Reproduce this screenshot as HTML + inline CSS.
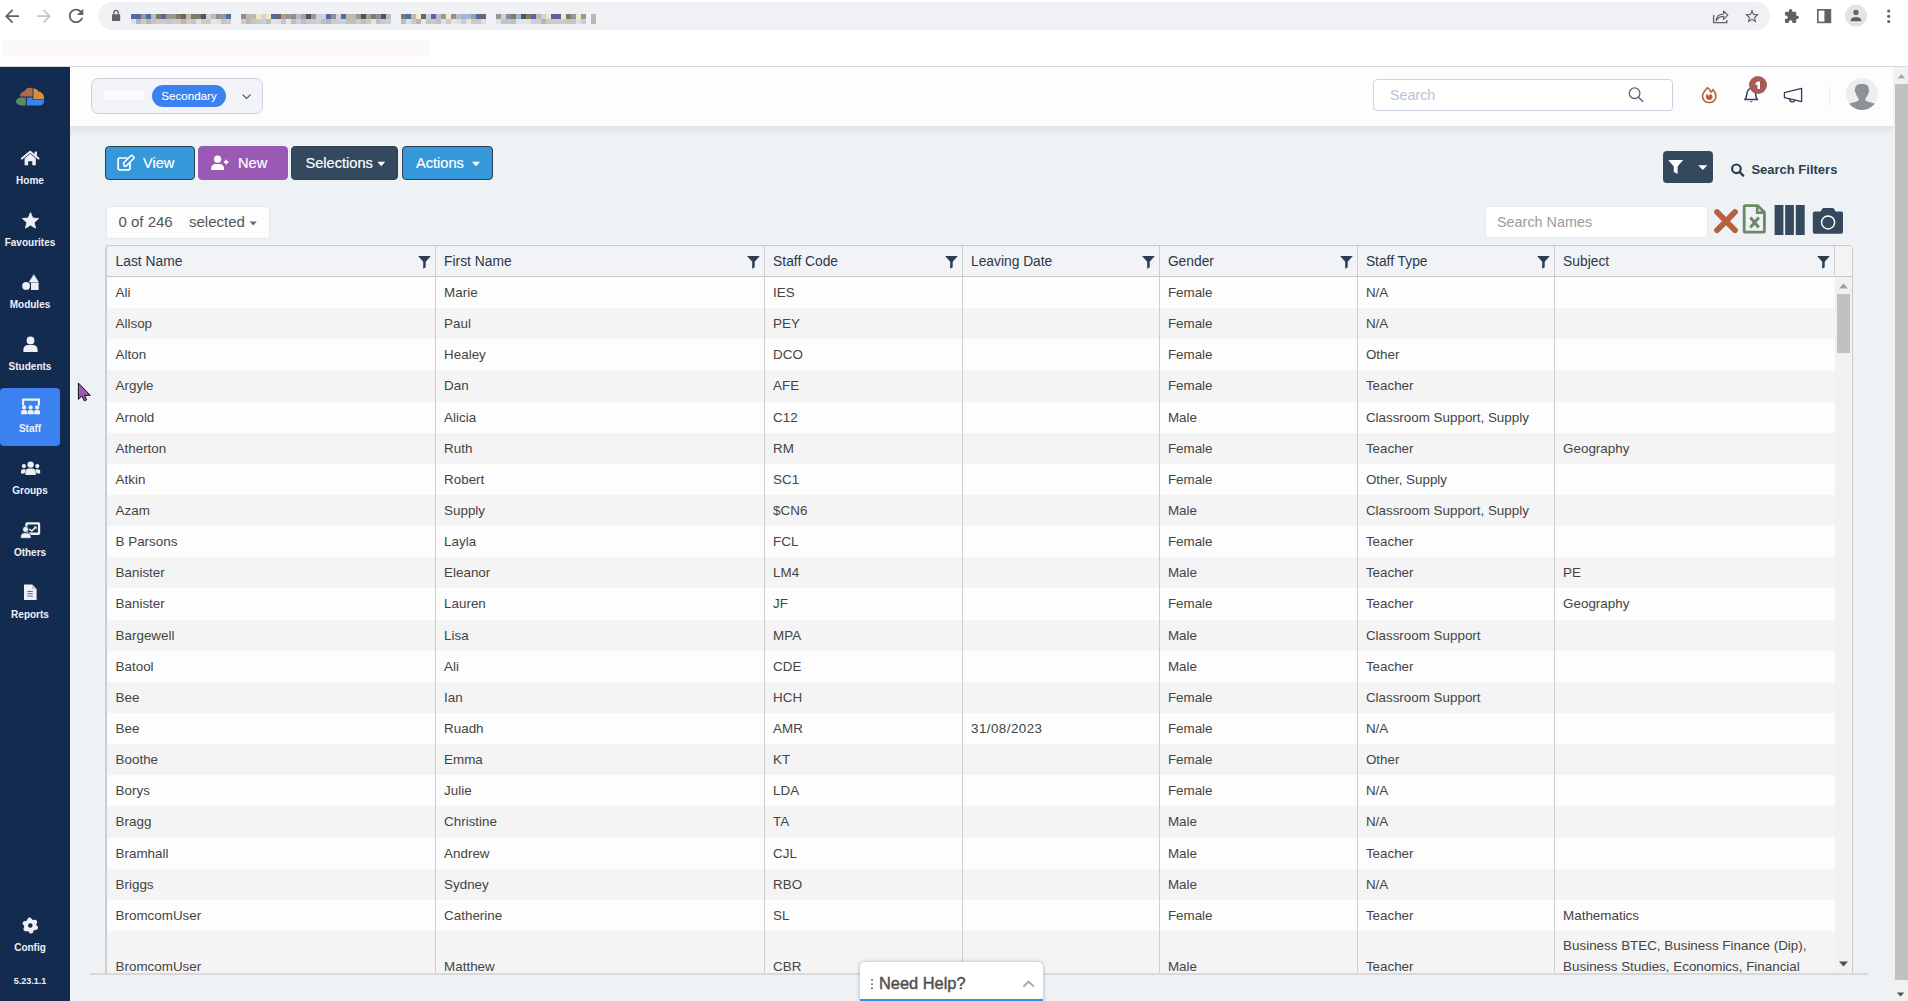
<!DOCTYPE html>
<html><head><meta charset="utf-8"><title>Staff</title>
<style>
*{box-sizing:border-box;margin:0;padding:0}
html,body{width:1908px;height:1001px;overflow:hidden;background:#fff;font-family:"Liberation Sans",sans-serif;position:relative}
.a{position:absolute}
svg.a{overflow:visible}
#chrome{left:0;top:0;width:1908px;height:67px;background:#fff;border-bottom:1px solid #d6d8dc}
#omni{left:98px;top:2px;width:1672px;height:28px;border-radius:14px;background:#eff1f4}
#side{left:0;top:67px;width:70px;height:934px;background:#142b50}
.lbl{position:absolute;left:0;width:60px;text-align:center;color:#eef0f5;font-weight:bold;font-size:10px;line-height:12px;white-space:nowrap}
#hdr{left:70px;top:67px;width:1823px;height:59px;background:#fdfdfe}
#main{left:70px;top:126px;width:1823px;height:875px;background:#eff2f5}
#shadow{left:70px;top:126px;width:1823px;height:11px;background:linear-gradient(#e2e4e7,#eff2f5)}
.btn{position:absolute;top:146px;height:34px;border-radius:4px;color:#fff;font-size:14.6px;line-height:33px;white-space:nowrap;-webkit-text-stroke:0.2px #fff}
#tbl{left:106px;top:245px;width:1747px;height:729px;border:1px solid #c9c9c9;border-radius:4px 4px 0 0;background:#fdfdfd;overflow:hidden;box-shadow:-1px 0 0 #d4d4d4}
.th{position:absolute;top:0;height:31px;background:#f1f3f7;border-bottom:1px solid #c9c9c9;color:#2d3748;font-size:13.8px;line-height:31.6px;padding-left:8.6px;white-space:nowrap}
.th svg{position:absolute;right:4.6px;top:10px}
.row{position:absolute;left:0;width:1728px;height:31.1px}
.row.g{background:#f4f4f4}
.c{position:absolute;top:0;height:100%;color:#444;font-size:13.4px;padding-left:8.6px;display:flex;align-items:center;white-space:nowrap}
.vl{position:absolute;top:31px;bottom:0;width:1px;background:#cfcfcf}
</style></head><body>

<!-- ============ CHROME ============ -->
<div id="chrome" class="a">
  <div id="omni" class="a"></div>
  <div class="a" style="left:3px;top:40px;width:427px;height:17px;background:#fdf9f8"></div>
<svg class="a" style="left:0;top:0" width="1908" height="67"><g filter="url(#bl)"><rect x="131" y="14" width="5" height="5" fill="#4a6ea8"/><rect x="131" y="19" width="5" height="5" fill="#d9dde6" opacity=".8"/><rect x="136" y="14" width="5" height="5" fill="#5d62a8"/><rect x="136" y="19" width="5" height="5" fill="#a9a9a9" opacity=".8"/><rect x="141" y="14" width="5" height="5" fill="#9a9690"/><rect x="141" y="19" width="5" height="5" fill="#c8c0b6" opacity=".8"/><rect x="146" y="14" width="5" height="5" fill="#4a6ea8"/><rect x="146" y="19" width="5" height="5" fill="#a9a9a9" opacity=".8"/><rect x="151" y="14" width="5" height="5" fill="#b9bcc4"/><rect x="151" y="19" width="5" height="5" fill="#b7bac2" opacity=".8"/><rect x="156" y="14" width="5" height="5" fill="#7d7b66"/><rect x="156" y="19" width="5" height="5" fill="#c8c0b6" opacity=".8"/><rect x="161" y="14" width="5" height="5" fill="#5d62a8"/><rect x="161" y="19" width="5" height="5" fill="#c6c2bb" opacity=".8"/><rect x="166" y="14" width="5" height="5" fill="#9a9690"/><rect x="166" y="19" width="5" height="5" fill="#b7bac2" opacity=".8"/><rect x="171" y="14" width="5" height="5" fill="#9a9690"/><rect x="171" y="19" width="5" height="5" fill="#c6c2bb" opacity=".8"/><rect x="176" y="14" width="5" height="5" fill="#7d7b66"/><rect x="176" y="19" width="5" height="5" fill="#c8c0b6" opacity=".8"/><rect x="181" y="14" width="5" height="5" fill="#6d6362"/><rect x="181" y="19" width="5" height="5" fill="#a9a9a9" opacity=".8"/><rect x="186" y="14" width="5" height="5" fill="#c7b6a5"/><rect x="186" y="19" width="5" height="5" fill="#c6c2bb" opacity=".8"/><rect x="191" y="14" width="5" height="5" fill="#7d7b66"/><rect x="191" y="19" width="5" height="5" fill="#b7bac2" opacity=".8"/><rect x="196" y="14" width="5" height="5" fill="#7d7b66"/><rect x="196" y="19" width="5" height="5" fill="#d9dde6" opacity=".8"/><rect x="201" y="14" width="5" height="5" fill="#4d555b"/><rect x="201" y="19" width="5" height="5" fill="#c6c2bb" opacity=".8"/><rect x="206" y="14" width="5" height="5" fill="#c9d2e2"/><rect x="206" y="19" width="5" height="5" fill="#c8c0b6" opacity=".8"/><rect x="211" y="14" width="5" height="5" fill="#c7b6a5"/><rect x="211" y="19" width="5" height="5" fill="#e8e2d6" opacity=".8"/><rect x="216" y="14" width="5" height="5" fill="#8b9096"/><rect x="216" y="19" width="5" height="5" fill="#d9dde6" opacity=".8"/><rect x="221" y="14" width="5" height="5" fill="#9a9690"/><rect x="221" y="19" width="5" height="5" fill="#b7bac2" opacity=".8"/><rect x="226" y="14" width="5" height="5" fill="#4a6ea8"/><rect x="226" y="19" width="5" height="5" fill="#c8c0b6" opacity=".8"/><rect x="241" y="14" width="5" height="5" fill="#8b9096"/><rect x="241" y="19" width="5" height="5" fill="#c8c0b6" opacity=".8"/><rect x="246" y="14" width="5" height="5" fill="#c7b6a5"/><rect x="246" y="19" width="5" height="5" fill="#a9a9a9" opacity=".8"/><rect x="251" y="14" width="5" height="5" fill="#c7b6a5"/><rect x="251" y="19" width="5" height="5" fill="#b7bac2" opacity=".8"/><rect x="256" y="14" width="5" height="5" fill="#f3e6c9"/><rect x="256" y="19" width="5" height="5" fill="#c6c2bb" opacity=".8"/><rect x="261" y="14" width="5" height="5" fill="#d3d3d8"/><rect x="261" y="19" width="5" height="5" fill="#bfc7d6" opacity=".8"/><rect x="266" y="14" width="5" height="5" fill="#f3e6c9"/><rect x="266" y="19" width="5" height="5" fill="#aeb4bc" opacity=".8"/><rect x="271" y="14" width="5" height="5" fill="#4a6ea8"/><rect x="271" y="19" width="5" height="5" fill="#e8e2d6" opacity=".8"/><rect x="276" y="14" width="5" height="5" fill="#6d6362"/><rect x="276" y="19" width="5" height="5" fill="#d9dde6" opacity=".8"/><rect x="281" y="14" width="5" height="5" fill="#a29f98"/><rect x="281" y="19" width="5" height="5" fill="#b7bac2" opacity=".8"/><rect x="286" y="14" width="5" height="5" fill="#9a9690"/><rect x="286" y="19" width="5" height="5" fill="#e8e2d6" opacity=".8"/><rect x="291" y="14" width="5" height="5" fill="#8b9096"/><rect x="291" y="19" width="5" height="5" fill="#aeb4bc" opacity=".8"/><rect x="296" y="14" width="5" height="5" fill="#b9bcc4"/><rect x="296" y="19" width="5" height="5" fill="#bfc7d6" opacity=".8"/><rect x="301" y="14" width="5" height="5" fill="#a29f98"/><rect x="301" y="19" width="5" height="5" fill="#aeb4bc" opacity=".8"/><rect x="306" y="14" width="5" height="5" fill="#4d555b"/><rect x="306" y="19" width="5" height="5" fill="#c8c0b6" opacity=".8"/><rect x="311" y="14" width="5" height="5" fill="#9a9690"/><rect x="311" y="19" width="5" height="5" fill="#c6c2bb" opacity=".8"/><rect x="316" y="14" width="5" height="5" fill="#c9d2e2"/><rect x="316" y="19" width="5" height="5" fill="#bfc7d6" opacity=".8"/><rect x="321" y="14" width="5" height="5" fill="#c9d2e2"/><rect x="321" y="19" width="5" height="5" fill="#aeb4bc" opacity=".8"/><rect x="326" y="14" width="5" height="5" fill="#5d62a8"/><rect x="326" y="19" width="5" height="5" fill="#a9a9a9" opacity=".8"/><rect x="331" y="14" width="5" height="5" fill="#8a8e9c"/><rect x="331" y="19" width="5" height="5" fill="#c8c0b6" opacity=".8"/><rect x="336" y="14" width="5" height="5" fill="#d3d3d8"/><rect x="336" y="19" width="5" height="5" fill="#bfc7d6" opacity=".8"/><rect x="341" y="14" width="5" height="5" fill="#4a6ea8"/><rect x="341" y="19" width="5" height="5" fill="#bfc7d6" opacity=".8"/><rect x="346" y="14" width="5" height="5" fill="#c7b6a5"/><rect x="346" y="19" width="5" height="5" fill="#aeb4bc" opacity=".8"/><rect x="351" y="14" width="5" height="5" fill="#c7b6a5"/><rect x="351" y="19" width="5" height="5" fill="#aeb4bc" opacity=".8"/><rect x="356" y="14" width="5" height="5" fill="#9a9690"/><rect x="356" y="19" width="5" height="5" fill="#c8c0b6" opacity=".8"/><rect x="361" y="14" width="5" height="5" fill="#4d555b"/><rect x="361" y="19" width="5" height="5" fill="#aeb4bc" opacity=".8"/><rect x="366" y="14" width="5" height="5" fill="#a29f98"/><rect x="366" y="19" width="5" height="5" fill="#c8c0b6" opacity=".8"/><rect x="371" y="14" width="5" height="5" fill="#7d7b66"/><rect x="371" y="19" width="5" height="5" fill="#e8e2d6" opacity=".8"/><rect x="376" y="14" width="5" height="5" fill="#8a8e9c"/><rect x="376" y="19" width="5" height="5" fill="#aeb4bc" opacity=".8"/><rect x="381" y="14" width="5" height="5" fill="#4d555b"/><rect x="381" y="19" width="5" height="5" fill="#c6c2bb" opacity=".8"/><rect x="386" y="14" width="5" height="5" fill="#b9bcc4"/><rect x="386" y="19" width="5" height="5" fill="#bfc7d6" opacity=".8"/><rect x="401" y="14" width="5" height="5" fill="#7d7b66"/><rect x="401" y="19" width="5" height="5" fill="#aeb4bc" opacity=".8"/><rect x="406" y="14" width="5" height="5" fill="#4a6ea8"/><rect x="406" y="19" width="5" height="5" fill="#d9dde6" opacity=".8"/><rect x="411" y="14" width="5" height="5" fill="#c7b6a5"/><rect x="411" y="19" width="5" height="5" fill="#c8c0b6" opacity=".8"/><rect x="416" y="14" width="5" height="5" fill="#f3e6c9"/><rect x="416" y="19" width="5" height="5" fill="#a9a9a9" opacity=".8"/><rect x="421" y="14" width="5" height="5" fill="#6d6362"/><rect x="421" y="19" width="5" height="5" fill="#e8e2d6" opacity=".8"/><rect x="426" y="14" width="5" height="5" fill="#c9d2e2"/><rect x="426" y="19" width="5" height="5" fill="#b7bac2" opacity=".8"/><rect x="431" y="14" width="5" height="5" fill="#5d62a8"/><rect x="431" y="19" width="5" height="5" fill="#c6c2bb" opacity=".8"/><rect x="436" y="14" width="5" height="5" fill="#b9bcc4"/><rect x="436" y="19" width="5" height="5" fill="#aeb4bc" opacity=".8"/><rect x="441" y="14" width="5" height="5" fill="#9a9690"/><rect x="441" y="19" width="5" height="5" fill="#d9dde6" opacity=".8"/><rect x="446" y="14" width="5" height="5" fill="#f3e6c9"/><rect x="446" y="19" width="5" height="5" fill="#c6c2bb" opacity=".8"/><rect x="451" y="14" width="5" height="5" fill="#8b9096"/><rect x="451" y="19" width="5" height="5" fill="#e8e2d6" opacity=".8"/><rect x="456" y="14" width="5" height="5" fill="#b9bcc4"/><rect x="456" y="19" width="5" height="5" fill="#d9dde6" opacity=".8"/><rect x="461" y="14" width="5" height="5" fill="#9fb7d6"/><rect x="461" y="19" width="5" height="5" fill="#c6c2bb" opacity=".8"/><rect x="466" y="14" width="5" height="5" fill="#9fb7d6"/><rect x="466" y="19" width="5" height="5" fill="#e8e2d6" opacity=".8"/><rect x="471" y="14" width="5" height="5" fill="#a29f98"/><rect x="471" y="19" width="5" height="5" fill="#c6c2bb" opacity=".8"/><rect x="476" y="14" width="5" height="5" fill="#4a6ea8"/><rect x="476" y="19" width="5" height="5" fill="#c6c2bb" opacity=".8"/><rect x="481" y="14" width="5" height="5" fill="#6d6362"/><rect x="481" y="19" width="5" height="5" fill="#d9dde6" opacity=".8"/><rect x="496" y="14" width="5" height="5" fill="#9a9690"/><rect x="496" y="19" width="5" height="5" fill="#d9dde6" opacity=".8"/><rect x="501" y="14" width="5" height="5" fill="#c9d2e2"/><rect x="501" y="19" width="5" height="5" fill="#b7bac2" opacity=".8"/><rect x="506" y="14" width="5" height="5" fill="#8a8e9c"/><rect x="506" y="19" width="5" height="5" fill="#b7bac2" opacity=".8"/><rect x="511" y="14" width="5" height="5" fill="#7d7b66"/><rect x="511" y="19" width="5" height="5" fill="#aeb4bc" opacity=".8"/><rect x="516" y="14" width="5" height="5" fill="#9fb7d6"/><rect x="516" y="19" width="5" height="5" fill="#d9dde6" opacity=".8"/><rect x="521" y="14" width="5" height="5" fill="#4d555b"/><rect x="521" y="19" width="5" height="5" fill="#e8e2d6" opacity=".8"/><rect x="526" y="14" width="5" height="5" fill="#7d7b66"/><rect x="526" y="19" width="5" height="5" fill="#d9dde6" opacity=".8"/><rect x="531" y="14" width="5" height="5" fill="#5d62a8"/><rect x="531" y="19" width="5" height="5" fill="#bfc7d6" opacity=".8"/><rect x="536" y="14" width="5" height="5" fill="#c7b6a5"/><rect x="536" y="19" width="5" height="5" fill="#bfc7d6" opacity=".8"/><rect x="541" y="14" width="5" height="5" fill="#c9d2e2"/><rect x="541" y="19" width="5" height="5" fill="#a9a9a9" opacity=".8"/><rect x="546" y="14" width="5" height="5" fill="#f3e6c9"/><rect x="546" y="19" width="5" height="5" fill="#c6c2bb" opacity=".8"/><rect x="551" y="14" width="5" height="5" fill="#5d62a8"/><rect x="551" y="19" width="5" height="5" fill="#c6c2bb" opacity=".8"/><rect x="556" y="14" width="5" height="5" fill="#5d62a8"/><rect x="556" y="19" width="5" height="5" fill="#c8c0b6" opacity=".8"/><rect x="561" y="14" width="5" height="5" fill="#f3e6c9"/><rect x="561" y="19" width="5" height="5" fill="#c6c2bb" opacity=".8"/><rect x="566" y="14" width="5" height="5" fill="#7d7b66"/><rect x="566" y="19" width="5" height="5" fill="#b7bac2" opacity=".8"/><rect x="571" y="14" width="5" height="5" fill="#9a9690"/><rect x="571" y="19" width="5" height="5" fill="#b7bac2" opacity=".8"/><rect x="576" y="14" width="5" height="5" fill="#f3e6c9"/><rect x="576" y="19" width="5" height="5" fill="#d9dde6" opacity=".8"/><rect x="581" y="14" width="5" height="5" fill="#9a9690"/><rect x="581" y="19" width="5" height="5" fill="#bfc7d6" opacity=".8"/><rect x="591" y="14" width="5" height="5" fill="#c7b6a5"/><rect x="591" y="19" width="5" height="5" fill="#a9a9a9" opacity=".8"/></g><defs><filter id="bl"><feGaussianBlur stdDeviation="0.45"/></filter></defs><path transform="translate(1.5 5.7) scale(0.875)" d="M20 11H7.83l5.59-5.59L12 4l-8 8 8 8 1.41-1.41L7.83 13H20v-2z" fill="#5f6368"/><path transform="translate(33.5 5.7) scale(0.875)" d="M12 4l-1.41 1.41L16.17 11H4v2h12.17l-5.58 5.59L12 20l8-8z" fill="#c4c6c9"/><path transform="translate(65.3 5.1) scale(0.9)" d="M17.65 6.35C16.2 4.9 14.21 4 12 4c-4.42 0-7.99 3.58-7.99 8s3.57 8 7.99 8c3.73 0 6.84-2.55 7.73-6h-2.08c-.82 2.33-3.04 4-5.65 4-3.31 0-6-2.69-6-6s2.69-6 6-6c1.66 0 3.14.69 4.22 1.78L13 11h7V4l-2.35 2.35z" fill="#5f6368"/><rect x="112" y="14.3" width="8.2" height="6.7" rx="0.8" fill="#5f6368"/><path d="M113.9 14.6 V12.6 A2.2 2.2 0 0 1 118.3 12.6 V14.6" stroke="#5f6368" stroke-width="1.4" fill="none"/><path d="M1713.6 15 V22.6 H1726.8 V20" stroke="#5f6368" stroke-width="1.3" fill="none"/><path d="M1716.2 20.8 C1716.6 16.2 1719.6 14 1723.6 14 V11 L1727.8 15.2 L1723.6 19.4 V16.4 C1720.4 16.4 1718 17.6 1716.2 20.8Z" stroke="#5f6368" stroke-width="1.2" fill="none" stroke-linejoin="round"/><path transform="translate(1743.6 7.9) scale(0.7)" d="M22 9.24l-7.19-.62L12 2 9.19 8.63 2 9.24l5.46 4.73L5.82 21 12 17.27 18.18 21l-1.63-7.03L22 9.24zM12 15.4l-3.76 2.27 1-4.28-3.32-2.88 4.38-.38L12 6.1l1.71 4.04 4.38.38-3.32 2.88 1 4.28L12 15.4z" fill="#5f6368"/><path transform="translate(1783.6 8.3) scale(0.667)" d="M20.5 11H19V7c0-1.1-.9-2-2-2h-4V3.5C13 2.12 11.880 1 10.5 1S8 2.12 8 3.5V5H4c-1.1 0-1.99.9-1.99 2v3.8H3.5c1.49 0 2.7 1.21 2.7 2.7s-1.21 2.7-2.7 2.7H2V20c0 1.1.9 2 2 2h3.8v-1.5c0-1.49 1.21-2.7 2.7-2.7 1.490 0 2.7 1.21 2.7 2.7V22H17c1.1 0 2-.9 2-2v-4h1.5c1.38 0 2.5-1.12 2.5-2.5S21.88 11 20.5 11z" fill="#5f6368"/><rect x="1817.8" y="9.8" width="12.6" height="12.6" stroke="#5f6368" stroke-width="1.6" fill="none"/><rect x="1824.4" y="9.8" width="6" height="12.6" fill="#5f6368"/><circle cx="1856" cy="15.8" r="11" fill="#e3e4e6"/><circle cx="1856" cy="12.4" r="2.6" fill="#5f6368"/><path d="M1850.8 21.2 V20.2 C1850.8 18 1853.6 16.9 1856 16.9 C1858.4 16.9 1861.2 18 1861.2 20.2 V21.2Z" fill="#5f6368"/><circle cx="1888.7" cy="11" r="1.6" fill="#5f6368"/><circle cx="1888.7" cy="16.3" r="1.6" fill="#5f6368"/><circle cx="1888.7" cy="21.5" r="1.6" fill="#5f6368"/></svg>
</div>

<!-- ============ SIDEBAR ============ -->
<div id="side" class="a">
<div class="a" style="left:0;top:321px;width:60px;height:58px;border-radius:4px;background:#3b82f0"></div>
<div class="lbl" style="top:107.7px">Home</div>
<div class="lbl" style="top:169.7px">Favourites</div>
<div class="lbl" style="top:231.7px">Modules</div>
<div class="lbl" style="top:293.7px">Students</div>
<div class="lbl" style="top:355.7px">Staff</div>
<div class="lbl" style="top:417.7px">Groups</div>
<div class="lbl" style="top:479.7px">Others</div>
<div class="lbl" style="top:541.7px">Reports</div>
<div class="lbl" style="top:874.9px">Config</div>
<div class="lbl" style="top:908.1px;font-size:9px">5.23.1.1</div>
</div>

<!-- ============ HEADER ============ -->
<div id="hdr" class="a">
<div class="a" style="left:21px;top:11px;width:172px;height:35.5px;border:1px solid #c9d3e0;border-radius:7px;background:#f1f3f8"></div>
<div class="a" style="left:34px;top:24px;width:40px;height:9px;background:#fefbfa"></div>
<div class="a" style="left:82px;top:18px;width:74px;height:22px;border-radius:11px;background:#3b82f0;color:#fff;font-size:11.6px;line-height:22px;text-align:center;-webkit-text-stroke:0.1px #fff">Secondary</div>
<div class="a" style="left:1303px;top:12px;width:300px;height:32px;border:1px solid #c9d3e1;border-radius:4px;background:#fff;color:#b9c2cf;font-size:14.3px;line-height:30px;padding-left:16px">Search</div>
</div>
<div id="main" class="a"></div>
<div id="shadow" class="a"></div>
<div class="btn" style="left:105px;width:90px;background:#3498db;border:1px solid #2c3e50;padding-left:37px">View</div>
<div class="btn" style="left:198px;width:89.6px;background:#9b59b6;border:1px solid #9b59b6;padding-left:39px">New</div>
<div class="btn" style="left:291px;width:107px;background:#34495e;border:1px solid #2c3e50;padding-left:13.5px">Selections</div>
<div class="btn" style="left:402px;width:91px;background:#3498db;border:1px solid #2c3e50;padding-left:13px">Actions</div>
<div class="a" style="left:105.5px;top:205.5px;width:164px;height:33px;background:#fdfdfd;border-radius:2.5px;border:1px solid #e6e8eb;color:#555;font-size:15px;line-height:30px;white-space:nowrap"><span class="a" style="left:12px">0 of 246</span><span class="a" style="left:82.5px">selected</span></div>
<div class="a" style="left:1663px;top:151px;width:50px;height:32px;background:#34495e;border-radius:4px"></div>
<div class="a" style="left:1751.4px;top:162px;font-weight:bold;font-size:13px;line-height:16px;color:#2c3e50;white-space:nowrap">Search Filters</div>
<div class="a" style="left:1485px;top:206px;width:223px;height:32px;background:#fff;border-radius:4px;border:1px solid #e6e9ed;color:#9a9a9a;font-size:14.4px;line-height:30px;padding-left:11px;white-space:nowrap">Search Names</div>

<!-- ============ TABLE ============ -->
<div id="tbl" class="a"><div class="row" style="top:31.00px;height:31.14px"><div class="c" style="left:0.0px;width:328.5px">Ali</div><div class="c" style="left:328.5px;width:329.0px">Marie</div><div class="c" style="left:657.5px;width:197.9px">IES</div><div class="c" style="left:855.4px;width:196.9px"></div><div class="c" style="left:1052.3px;width:198.0px">Female</div><div class="c" style="left:1250.3px;width:197.2px">N/A</div><div class="c" style="left:1447.5px;width:280.0px"></div></div>
<div class="row g" style="top:62.14px;height:31.14px"><div class="c" style="left:0.0px;width:328.5px">Allsop</div><div class="c" style="left:328.5px;width:329.0px">Paul</div><div class="c" style="left:657.5px;width:197.9px">PEY</div><div class="c" style="left:855.4px;width:196.9px"></div><div class="c" style="left:1052.3px;width:198.0px">Female</div><div class="c" style="left:1250.3px;width:197.2px">N/A</div><div class="c" style="left:1447.5px;width:280.0px"></div></div>
<div class="row" style="top:93.28px;height:31.14px"><div class="c" style="left:0.0px;width:328.5px">Alton</div><div class="c" style="left:328.5px;width:329.0px">Healey</div><div class="c" style="left:657.5px;width:197.9px">DCO</div><div class="c" style="left:855.4px;width:196.9px"></div><div class="c" style="left:1052.3px;width:198.0px">Female</div><div class="c" style="left:1250.3px;width:197.2px">Other</div><div class="c" style="left:1447.5px;width:280.0px"></div></div>
<div class="row g" style="top:124.42px;height:31.14px"><div class="c" style="left:0.0px;width:328.5px">Argyle</div><div class="c" style="left:328.5px;width:329.0px">Dan</div><div class="c" style="left:657.5px;width:197.9px">AFE</div><div class="c" style="left:855.4px;width:196.9px"></div><div class="c" style="left:1052.3px;width:198.0px">Female</div><div class="c" style="left:1250.3px;width:197.2px">Teacher</div><div class="c" style="left:1447.5px;width:280.0px"></div></div>
<div class="row" style="top:155.56px;height:31.14px"><div class="c" style="left:0.0px;width:328.5px">Arnold</div><div class="c" style="left:328.5px;width:329.0px">Alicia</div><div class="c" style="left:657.5px;width:197.9px">C12</div><div class="c" style="left:855.4px;width:196.9px"></div><div class="c" style="left:1052.3px;width:198.0px">Male</div><div class="c" style="left:1250.3px;width:197.2px">Classroom Support, Supply</div><div class="c" style="left:1447.5px;width:280.0px"></div></div>
<div class="row g" style="top:186.70px;height:31.14px"><div class="c" style="left:0.0px;width:328.5px">Atherton</div><div class="c" style="left:328.5px;width:329.0px">Ruth</div><div class="c" style="left:657.5px;width:197.9px">RM</div><div class="c" style="left:855.4px;width:196.9px"></div><div class="c" style="left:1052.3px;width:198.0px">Female</div><div class="c" style="left:1250.3px;width:197.2px">Teacher</div><div class="c" style="left:1447.5px;width:280.0px">Geography</div></div>
<div class="row" style="top:217.84px;height:31.14px"><div class="c" style="left:0.0px;width:328.5px">Atkin</div><div class="c" style="left:328.5px;width:329.0px">Robert</div><div class="c" style="left:657.5px;width:197.9px">SC1</div><div class="c" style="left:855.4px;width:196.9px"></div><div class="c" style="left:1052.3px;width:198.0px">Female</div><div class="c" style="left:1250.3px;width:197.2px">Other, Supply</div><div class="c" style="left:1447.5px;width:280.0px"></div></div>
<div class="row g" style="top:248.98px;height:31.14px"><div class="c" style="left:0.0px;width:328.5px">Azam</div><div class="c" style="left:328.5px;width:329.0px">Supply</div><div class="c" style="left:657.5px;width:197.9px">$CN6</div><div class="c" style="left:855.4px;width:196.9px"></div><div class="c" style="left:1052.3px;width:198.0px">Male</div><div class="c" style="left:1250.3px;width:197.2px">Classroom Support, Supply</div><div class="c" style="left:1447.5px;width:280.0px"></div></div>
<div class="row" style="top:280.12px;height:31.14px"><div class="c" style="left:0.0px;width:328.5px">B Parsons</div><div class="c" style="left:328.5px;width:329.0px">Layla</div><div class="c" style="left:657.5px;width:197.9px">FCL</div><div class="c" style="left:855.4px;width:196.9px"></div><div class="c" style="left:1052.3px;width:198.0px">Female</div><div class="c" style="left:1250.3px;width:197.2px">Teacher</div><div class="c" style="left:1447.5px;width:280.0px"></div></div>
<div class="row g" style="top:311.26px;height:31.14px"><div class="c" style="left:0.0px;width:328.5px">Banister</div><div class="c" style="left:328.5px;width:329.0px">Eleanor</div><div class="c" style="left:657.5px;width:197.9px">LM4</div><div class="c" style="left:855.4px;width:196.9px"></div><div class="c" style="left:1052.3px;width:198.0px">Male</div><div class="c" style="left:1250.3px;width:197.2px">Teacher</div><div class="c" style="left:1447.5px;width:280.0px">PE</div></div>
<div class="row" style="top:342.40px;height:31.14px"><div class="c" style="left:0.0px;width:328.5px">Banister</div><div class="c" style="left:328.5px;width:329.0px">Lauren</div><div class="c" style="left:657.5px;width:197.9px">JF</div><div class="c" style="left:855.4px;width:196.9px"></div><div class="c" style="left:1052.3px;width:198.0px">Female</div><div class="c" style="left:1250.3px;width:197.2px">Teacher</div><div class="c" style="left:1447.5px;width:280.0px">Geography</div></div>
<div class="row g" style="top:373.54px;height:31.14px"><div class="c" style="left:0.0px;width:328.5px">Bargewell</div><div class="c" style="left:328.5px;width:329.0px">Lisa</div><div class="c" style="left:657.5px;width:197.9px">MPA</div><div class="c" style="left:855.4px;width:196.9px"></div><div class="c" style="left:1052.3px;width:198.0px">Male</div><div class="c" style="left:1250.3px;width:197.2px">Classroom Support</div><div class="c" style="left:1447.5px;width:280.0px"></div></div>
<div class="row" style="top:404.68px;height:31.14px"><div class="c" style="left:0.0px;width:328.5px">Batool</div><div class="c" style="left:328.5px;width:329.0px">Ali</div><div class="c" style="left:657.5px;width:197.9px">CDE</div><div class="c" style="left:855.4px;width:196.9px"></div><div class="c" style="left:1052.3px;width:198.0px">Male</div><div class="c" style="left:1250.3px;width:197.2px">Teacher</div><div class="c" style="left:1447.5px;width:280.0px"></div></div>
<div class="row g" style="top:435.82px;height:31.14px"><div class="c" style="left:0.0px;width:328.5px">Bee</div><div class="c" style="left:328.5px;width:329.0px">Ian</div><div class="c" style="left:657.5px;width:197.9px">HCH</div><div class="c" style="left:855.4px;width:196.9px"></div><div class="c" style="left:1052.3px;width:198.0px">Female</div><div class="c" style="left:1250.3px;width:197.2px">Classroom Support</div><div class="c" style="left:1447.5px;width:280.0px"></div></div>
<div class="row" style="top:466.96px;height:31.14px"><div class="c" style="left:0.0px;width:328.5px">Bee</div><div class="c" style="left:328.5px;width:329.0px">Ruadh</div><div class="c" style="left:657.5px;width:197.9px">AMR</div><div class="c" style="left:855.4px;width:196.9px"><span style="letter-spacing:0.45px">31/08/2023</span></div><div class="c" style="left:1052.3px;width:198.0px">Female</div><div class="c" style="left:1250.3px;width:197.2px">N/A</div><div class="c" style="left:1447.5px;width:280.0px"></div></div>
<div class="row g" style="top:498.10px;height:31.14px"><div class="c" style="left:0.0px;width:328.5px">Boothe</div><div class="c" style="left:328.5px;width:329.0px">Emma</div><div class="c" style="left:657.5px;width:197.9px">KT</div><div class="c" style="left:855.4px;width:196.9px"></div><div class="c" style="left:1052.3px;width:198.0px">Female</div><div class="c" style="left:1250.3px;width:197.2px">Other</div><div class="c" style="left:1447.5px;width:280.0px"></div></div>
<div class="row" style="top:529.24px;height:31.14px"><div class="c" style="left:0.0px;width:328.5px">Borys</div><div class="c" style="left:328.5px;width:329.0px">Julie</div><div class="c" style="left:657.5px;width:197.9px">LDA</div><div class="c" style="left:855.4px;width:196.9px"></div><div class="c" style="left:1052.3px;width:198.0px">Female</div><div class="c" style="left:1250.3px;width:197.2px">N/A</div><div class="c" style="left:1447.5px;width:280.0px"></div></div>
<div class="row g" style="top:560.38px;height:31.14px"><div class="c" style="left:0.0px;width:328.5px">Bragg</div><div class="c" style="left:328.5px;width:329.0px">Christine</div><div class="c" style="left:657.5px;width:197.9px">TA</div><div class="c" style="left:855.4px;width:196.9px"></div><div class="c" style="left:1052.3px;width:198.0px">Male</div><div class="c" style="left:1250.3px;width:197.2px">N/A</div><div class="c" style="left:1447.5px;width:280.0px"></div></div>
<div class="row" style="top:591.52px;height:31.14px"><div class="c" style="left:0.0px;width:328.5px">Bramhall</div><div class="c" style="left:328.5px;width:329.0px">Andrew</div><div class="c" style="left:657.5px;width:197.9px">CJL</div><div class="c" style="left:855.4px;width:196.9px"></div><div class="c" style="left:1052.3px;width:198.0px">Male</div><div class="c" style="left:1250.3px;width:197.2px">Teacher</div><div class="c" style="left:1447.5px;width:280.0px"></div></div>
<div class="row g" style="top:622.66px;height:31.14px"><div class="c" style="left:0.0px;width:328.5px">Briggs</div><div class="c" style="left:328.5px;width:329.0px">Sydney</div><div class="c" style="left:657.5px;width:197.9px">RBO</div><div class="c" style="left:855.4px;width:196.9px"></div><div class="c" style="left:1052.3px;width:198.0px">Male</div><div class="c" style="left:1250.3px;width:197.2px">N/A</div><div class="c" style="left:1447.5px;width:280.0px"></div></div>
<div class="row" style="top:653.80px;height:31.14px"><div class="c" style="left:0.0px;width:328.5px">BromcomUser</div><div class="c" style="left:328.5px;width:329.0px">Catherine</div><div class="c" style="left:657.5px;width:197.9px">SL</div><div class="c" style="left:855.4px;width:196.9px"></div><div class="c" style="left:1052.3px;width:198.0px">Female</div><div class="c" style="left:1250.3px;width:197.2px">Teacher</div><div class="c" style="left:1447.5px;width:280.0px">Mathematics</div></div>
<div class="row g" style="top:684.94px;height:72.00px"><div class="c" style="left:0.0px;width:328.5px">BromcomUser</div><div class="c" style="left:328.5px;width:329.0px">Matthew</div><div class="c" style="left:657.5px;width:197.9px">CBR</div><div class="c" style="left:855.4px;width:196.9px"></div><div class="c" style="left:1052.3px;width:198.0px">Male</div><div class="c" style="left:1250.3px;width:197.2px">Teacher</div><div class="c" style="left:1447.5px;width:280.0px;line-height:21.2px;white-space:nowrap">Business BTEC, Business Finance (Dip),<br>Business Studies, Economics, Financial<br>Studies</div></div>
<div class="vl" style="left:328.0px"></div>
<div class="vl" style="left:657.0px"></div>
<div class="vl" style="left:854.9px"></div>
<div class="vl" style="left:1051.8px"></div>
<div class="vl" style="left:1249.8px"></div>
<div class="vl" style="left:1447.0px"></div>
<div class="th" style="left:0.0px;width:328.5px">Last Name<svg width="13" height="14" viewBox="0 0 13 14"><path d="M0.1 0 H12.8 L7.7 5.8 V11.3 L5.2 12.8 V5.8Z" fill="#2f3d52"/></svg></div>
<div class="th" style="left:328.5px;width:329.0px">First Name<svg width="13" height="14" viewBox="0 0 13 14"><path d="M0.1 0 H12.8 L7.7 5.8 V11.3 L5.2 12.8 V5.8Z" fill="#2f3d52"/></svg></div>
<div class="th" style="left:657.5px;width:197.9px">Staff Code<svg width="13" height="14" viewBox="0 0 13 14"><path d="M0.1 0 H12.8 L7.7 5.8 V11.3 L5.2 12.8 V5.8Z" fill="#2f3d52"/></svg></div>
<div class="th" style="left:855.4px;width:196.9px">Leaving Date<svg width="13" height="14" viewBox="0 0 13 14"><path d="M0.1 0 H12.8 L7.7 5.8 V11.3 L5.2 12.8 V5.8Z" fill="#2f3d52"/></svg></div>
<div class="th" style="left:1052.3px;width:198.0px">Gender<svg width="13" height="14" viewBox="0 0 13 14"><path d="M0.1 0 H12.8 L7.7 5.8 V11.3 L5.2 12.8 V5.8Z" fill="#2f3d52"/></svg></div>
<div class="th" style="left:1250.3px;width:197.2px">Staff Type<svg width="13" height="14" viewBox="0 0 13 14"><path d="M0.1 0 H12.8 L7.7 5.8 V11.3 L5.2 12.8 V5.8Z" fill="#2f3d52"/></svg></div>
<div class="th" style="left:1447.5px;width:280.0px">Subject<svg width="13" height="14" viewBox="0 0 13 14"><path d="M0.1 0 H12.8 L7.7 5.8 V11.3 L5.2 12.8 V5.8Z" fill="#2f3d52"/></svg></div>
<div class="th" style="left:1727.5px;width:20px;background:#f3f3f3"></div>
<div class="a" style="left:328.0px;top:0;width:1px;height:31px;background:#cfcfcf"></div>
<div class="a" style="left:657.0px;top:0;width:1px;height:31px;background:#cfcfcf"></div>
<div class="a" style="left:854.9px;top:0;width:1px;height:31px;background:#cfcfcf"></div>
<div class="a" style="left:1051.8px;top:0;width:1px;height:31px;background:#cfcfcf"></div>
<div class="a" style="left:1249.8px;top:0;width:1px;height:31px;background:#cfcfcf"></div>
<div class="a" style="left:1447.0px;top:0;width:1px;height:31px;background:#cfcfcf"></div>
<div class="a" style="left:1727.0px;top:0;width:1px;height:31px;background:#cfcfcf"></div>
<div class="a" style="left:1728.0px;top:31px;width:17px;bottom:0;background:#f1f1f1"></div>
<div class="a" style="left:1729.5px;top:48px;width:13px;height:59px;background:#c1c1c1"></div>
<svg class="a" style="left:1732.0px;top:36.80000000000001px" width="9" height="6"><path d="M0 5.5 L4.5 0.5 L9 5.5Z" fill="#a3a3a3"/></svg>
<svg class="a" style="left:1732.0px;top:715px" width="9" height="6"><path d="M0 0.5 L4.5 5.5 L9 0.5Z" fill="#505050"/></svg></div>
<svg class="a" style="left:0;top:0;pointer-events:none" width="1908" height="1001"><path d="M20 96.5 C20 93 22.5 91.5 24.5 91.2 C25.5 88.8 28 87.7 30.5 87.8 L32.6 88 V96.5Z" fill="#b0694a"/>
<path d="M33.4 88.6 C35.8 88.4 37.8 89.8 38.4 91.6 C41.5 91.8 44 94.6 44 97.2 V99.2 H33.4Z" fill="#d4903a"/>
<path d="M25.8 97.4 V105.4 H21.8 C18.3 105.4 16 103.4 16 101.3 C16 99.2 18 97.4 21 97.4Z" fill="#5b8a68"/>
<path d="M26.9 97.4 H32.5 V99.8 H44 V101.4 C44 103.6 42 105.4 39.6 105.4 H26.9Z" fill="#3b82f0"/>
<path d="M21.9 158.6 L30.2 151.7 L38.5 158.6" stroke="#eef0f5" stroke-width="2" fill="none" stroke-linecap="round" stroke-linejoin="round"/>
<rect x="34.6" y="151.6" width="2.3" height="4.2" fill="#eef0f5"/>
<path d="M24.6 158.4 L30.2 153.8 L35.8 158.4 V165.2 H32.3 V161.2 H28.1 V165.2 H24.6Z" fill="#eef0f5"/>
<polygon points="30.50,212.60 32.79,218.04 38.68,218.54 34.21,222.41 35.55,228.16 30.50,225.10 25.45,228.16 26.79,222.41 22.32,218.54 28.21,218.04" fill="#eef0f5" stroke="#eef0f5" stroke-width="0.8" stroke-linejoin="round"/>
<circle cx="26.1" cy="285.9" r="3.9" fill="#eef0f5"/>
<path d="M29.2 282 L33.8 274.7 L38.4 282Z" fill="#eef0f5" stroke="#eef0f5" stroke-width="0.6" stroke-linejoin="round"/>
<rect x="31" y="282.6" width="7.6" height="7.4" fill="#eef0f5"/>
<circle cx="30.5" cy="340.4" r="3.9" fill="#eef0f5"/>
<path d="M23.4 352 V349.6 C23.4 346.6 25.4 344.9 28.2 344.9 H32.8 C35.6 344.9 37.6 346.6 37.6 349.6 V352Z" fill="#eef0f5"/>
<path d="M23.1 405.5 V399.6 H38.9 V405.5" stroke="#eef0f5" stroke-width="2.1" fill="none"/>
<circle cx="24.1" cy="407.4" r="2.1" fill="#eef0f5"/>
<path d="M21.1 414.2 V412.2 C21.1 410.8 22.1 410.1 23.1 410.1 H25.1 C26.1 410.1 27.1 410.8 27.1 412.2 V414.2Z" fill="#eef0f5"/>
<circle cx="30.6" cy="407.4" r="2.1" fill="#eef0f5"/>
<path d="M27.6 414.2 V412.2 C27.6 410.8 28.6 410.1 29.6 410.1 H31.6 C32.6 410.1 33.6 410.8 33.6 412.2 V414.2Z" fill="#eef0f5"/>
<circle cx="37.1" cy="407.4" r="2.1" fill="#eef0f5"/>
<path d="M34.1 414.2 V412.2 C34.1 410.8 35.1 410.1 36.1 410.1 H38.1 C39.1 410.1 40.1 410.8 40.1 412.2 V414.2Z" fill="#eef0f5"/>
<circle cx="30.6" cy="464.6" r="3.2" fill="#eef0f5"/>
<path d="M25.4 475 V472 C25.4 469.8 27 468.6 29 468.6 H32.2 C34.2 468.6 35.8 469.8 35.8 472 V475Z" fill="#eef0f5"/>
<circle cx="23.9" cy="466.1" r="2.1" fill="#eef0f5"/>
<circle cx="37.3" cy="466.1" r="2.1" fill="#eef0f5"/>
<path d="M21 473.6 V471.4 C21 470 22 469.2 23.4 469.2 H25.6 L24.6 473.6Z" fill="#eef0f5"/>
<path d="M40.2 473.6 V471.4 C40.2 470 39.2 469.2 37.8 469.2 H35.6 L36.6 473.6Z" fill="#eef0f5"/>
<rect x="26.45" y="523.45" width="12.6" height="10.3" stroke="#eef0f5" stroke-width="2.3" fill="none" rx="0.6"/>
<path d="M29.4 529.2 L31.8 531 L35.2 527.6" stroke="#eef0f5" stroke-width="1.5" fill="none"/>
<path d="M33.6 526.4 H36.6 V529.4Z" fill="#eef0f5"/>
<circle cx="25.6" cy="529.4" r="2.9" fill="#eef0f5" stroke="#142b50" stroke-width="0.6"/>
<path d="M20.6 538.4 V536.2 C20.6 534.2 22.2 532.8 24.4 532.8 H27 C29.2 532.8 31 534.2 31 536.2 V538.4Z" fill="#eef0f5" stroke="#142b50" stroke-width="0.8"/>
<path d="M24 584.6 H32.2 L36.6 589 V600 H24Z" fill="#eef0f5"/>
<path d="M32.2 584.6 V589 H36.6Z" fill="#b9c3d6"/>
<rect x="27.4" y="591.0" width="5.4" height="1" fill="#5b6c94"/>
<rect x="27.4" y="593.2" width="5.4" height="1" fill="#5b6c94"/>
<rect x="27.4" y="595.6" width="5.4" height="1" fill="#5b6c94"/>
<path d="M28.38 918.35 L30.30 918.10 L31.75 920.09 L33.10 920.65 L35.53 920.27 L36.71 921.80 L35.71 924.05 L35.90 925.50 L37.45 927.42 L36.71 929.20 L34.26 929.46 L33.10 930.35 L32.22 932.65 L30.30 932.90 L28.85 930.91 L27.50 930.35 L25.07 930.73 L23.89 929.20 L24.89 926.95 L24.70 925.50 L23.15 923.58 L23.89 921.80 L26.34 921.54 L27.50 920.65Z" fill="#eef0f5" stroke="#eef0f5" stroke-width="1.2" stroke-linejoin="round"/>
<circle cx="30.3" cy="925.5" r="2.3" fill="#142b50"/>
<path d="M78.4 383 L78.4 399.4 L81.9 395.9 L84.3 400.9 L86.7 399.7 L84.5 395.3 L90.3 395.3Z" fill="#9b59b6" stroke="#111" stroke-width="1"/><path d="M242.6 94.6 L246.6 98.4 L250.6 94.6" stroke="#46556b" stroke-width="1.25" fill="none"/>
<circle cx="1634.6" cy="93.2" r="5.3" stroke="#5d6470" stroke-width="1.3" fill="none"/>
<path d="M1638.5 97.2 L1642.8 101.4" stroke="#5d6470" stroke-width="1.4" stroke-linecap="round"/>
<path d="M1707.4 87.6 C1706 89.8 1702.5 92.4 1702.5 96.3 C1702.5 100 1705.5 102.5 1709.2 102.5 C1712.9 102.5 1715.9 100 1715.9 96.4 C1715.9 93.8 1714.6 91.3 1712.9 89.5 C1712.5 90.8 1711.9 91.6 1710.9 92 C1710.4 90.2 1709 88.6 1707.4 87.6Z" stroke="#b5603d" stroke-width="1.6" fill="none" stroke-linejoin="round"/>
<path d="M1705.9 96.6 C1705.9 95.4 1706.4 94.4 1707 93.7 C1707.6 95 1708.4 95.8 1709.2 95.4 C1709.8 95 1710 94.4 1710.4 93.5 C1711.6 94.6 1712.5 95.8 1712.5 97.1 C1712.5 98.9 1711 100.1 1709.2 100.1 C1707.3 100.1 1705.9 98.7 1705.9 96.6Z" fill="#b5603d"/>
<path d="M1744.8 99.6 H1757.6 L1756.2 97.6 C1755.6 94.6 1755.6 92 1754.4 90.4 C1753.4 89 1752.2 88.6 1751.2 88.6 C1750.2 88.6 1749 89 1748 90.4 C1746.8 92 1746.8 94.6 1746.2 97.6Z" stroke="#2c3e58" stroke-width="1.5" fill="none" stroke-linejoin="round"/>
<path d="M1749.6 101.2 H1752.8 L1751.2 102.6Z" fill="#2c3e58"/>
<circle cx="1758" cy="85" r="9" fill="#a85b53"/>
<path d="M1757.5 81.6 H1760 V89 H1757.5 V84.6 L1755.6 85.3 V83.1Z" fill="#fff"/>
<path d="M1784.4 92.6 L1801.6 88.4 V101.6 L1784.4 97.6Z" stroke="#2c3e58" stroke-width="1.3" fill="none" stroke-linejoin="round"/>
<path d="M1789.8 98.6 A2.6 2.6 0 0 0 1795 99.8" stroke="#2c3e58" stroke-width="1.3" fill="none"/>
<rect x="1829" y="84.4" width="1" height="23" fill="#eceef3"/>
<clipPath id="av"><circle cx="1862" cy="94" r="16"/></clipPath>
<circle cx="1862" cy="94" r="16" fill="#eceef2"/>
<g clip-path="url(#av)" fill="#8c929a"><path d="M1855.3 89.6 C1855 85.2 1857.4 84 1862 84 C1866.6 84 1869 85.2 1868.7 89.6 C1869.5 89.8 1869.3 91.8 1868.6 92.2 C1868 95.6 1866 97.8 1865.4 98.2 V100.4 C1867.4 102 1873 102.4 1876.2 104.2 L1876 112 H1848 L1847.8 104.2 C1851 102.4 1856.6 102 1858.6 100.4 V98.2 C1858 97.8 1856 95.6 1855.4 92 C1854.6 91.6 1854.4 89.2 1855.2 89Z"/></g><path d="M127.6 158 H119.4 C118.6 158 118.2 158.4 118.2 159.2 V168.6 C118.2 169.4 118.6 169.8 119.4 169.8 H128.8 C129.6 169.8 130 169.4 130 168.6 V163" stroke="#fff" stroke-width="1.7" fill="none"/>
<path d="M124.2 166.2 L123.5 163 L130.9 155.8 C131.4 155.3 132.1 155.3 132.6 155.8 L133.6 156.8 C134.1 157.3 134.1 158 133.6 158.5 L126.4 165.9Z" stroke="#fff" stroke-width="1.6" fill="none" stroke-linejoin="round"/>
<circle cx="217.6" cy="159.2" r="3.6" fill="#fff"/>
<path d="M211.2 170 V168.6 C211.2 165.6 213 164 215.4 164 H219.8 C222.2 164 224 165.6 224 168.6 V170Z" fill="#fff"/>
<path d="M226.2 159.8 V164.4 M223.9 162.1 H228.5" stroke="#fff" stroke-width="1.6"/>
<path d="M377.4 161.8 H385.2 L381.3 166.2Z" fill="#fff"/>
<path d="M472 161.8 H480 L476 166.2Z" fill="#fff"/>
<path d="M249.6 221.6 H256.8 L253.2 225.4Z" fill="#666"/>
<path d="M1668.2 160 H1683.2 L1677.6 166.6 V174 L1673.8 172 V166.6Z" fill="#fff"/>
<path d="M1698.2 165.2 H1707.4 L1702.8 170Z" fill="#fff"/>
<circle cx="1736.4" cy="168.8" r="4.3" stroke="#2c3e50" stroke-width="2.2" fill="none"/>
<path d="M1739.8 172.2 L1743.2 175.6" stroke="#2c3e50" stroke-width="2.4" stroke-linecap="round"/>
<path d="M1717 212 L1735 230.2 M1735 212 L1717 230.2" stroke="#b5613f" stroke-width="5.8" stroke-linecap="round"/>
<path d="M1745.2 205.6 H1757.6 L1764.4 212.2 V231 C1764.4 231.8 1764 232.2 1763.2 232.2 H1745.2 C1744.6 232.2 1744.2 231.8 1744.2 231 V206.8 C1744.2 206 1744.6 205.6 1745.2 205.6Z" stroke="#6a8a64" stroke-width="2.8" fill="none" stroke-linejoin="round"/>
<path d="M1757.2 205.8 V212.6 H1764.2" stroke="#6a8a64" stroke-width="2.6" fill="none"/>
<path d="M1750.4 217.6 L1758.8 227.4 M1758.8 217.6 L1750.4 227.4" stroke="#6a8a64" stroke-width="3"/>
<rect x="1774.6" y="205" width="8.8" height="30" fill="#34495e"/><rect x="1785.2" y="205" width="8.7" height="30" fill="#34495e"/><rect x="1795.8" y="205" width="8.9" height="30" fill="#34495e"/>
<path d="M1814.8 211.4 H1820.6 L1822.2 208.8 C1822.6 208.2 1823 208 1823.8 208 H1832.4 C1833.2 208 1833.6 208.2 1834 208.8 L1835.6 211.4 H1841 C1842.2 211.4 1843 212.2 1843 213.4 V231.8 C1843 233 1842.2 233.8 1841 233.8 H1814.8 C1813.6 233.8 1812.8 233 1812.8 231.8 V213.4 C1812.8 212.2 1813.6 211.4 1814.8 211.4Z" fill="#34495e"/>
<circle cx="1828.1" cy="222.4" r="6.5" stroke="#fff" stroke-width="1.5" fill="none"/></svg><div class="a" style="left:90px;top:973px;width:1778px;height:2px;background:#d9d9da"></div>
<div class="a" style="left:1893px;top:67px;width:15px;height:934px;background:#f1f1f1"></div>
<div class="a" style="left:1895px;top:84px;width:13px;height:896px;background:#c1c1c1"></div>
<div class="a" style="left:860px;top:962px;width:183px;height:39px;background:#fff;border-radius:5px 5px 0 0;box-shadow:0 0 4px rgba(0,0,0,.28);border-bottom:2px solid #3a8fd8"></div>
<div class="a" style="left:879px;top:974px;font-size:16.4px;line-height:18px;color:#505050;white-space:nowrap;-webkit-text-stroke:0.45px #505050">Need Help?</div><svg class="a" style="left:0;top:0;pointer-events:none" width="1908" height="1001"><path d="M1897.6 78.2 L1901.4 74.2 L1905.2 78.2Z" fill="#a3a3a3"/>
<path d="M1896.8 992.6 H1904.2 L1900.5 996.4Z" fill="#505050"/>
<circle cx="872" cy="979.9" r="0.95" fill="#555"/>
<circle cx="872" cy="984.1" r="0.95" fill="#555"/>
<circle cx="872" cy="988.3" r="0.95" fill="#555"/>
<path d="M1023.4 986.6 L1028.6 981.6 L1033.8 986.6" stroke="#a9a9a9" stroke-width="2" fill="none"/></svg>
</body></html>
